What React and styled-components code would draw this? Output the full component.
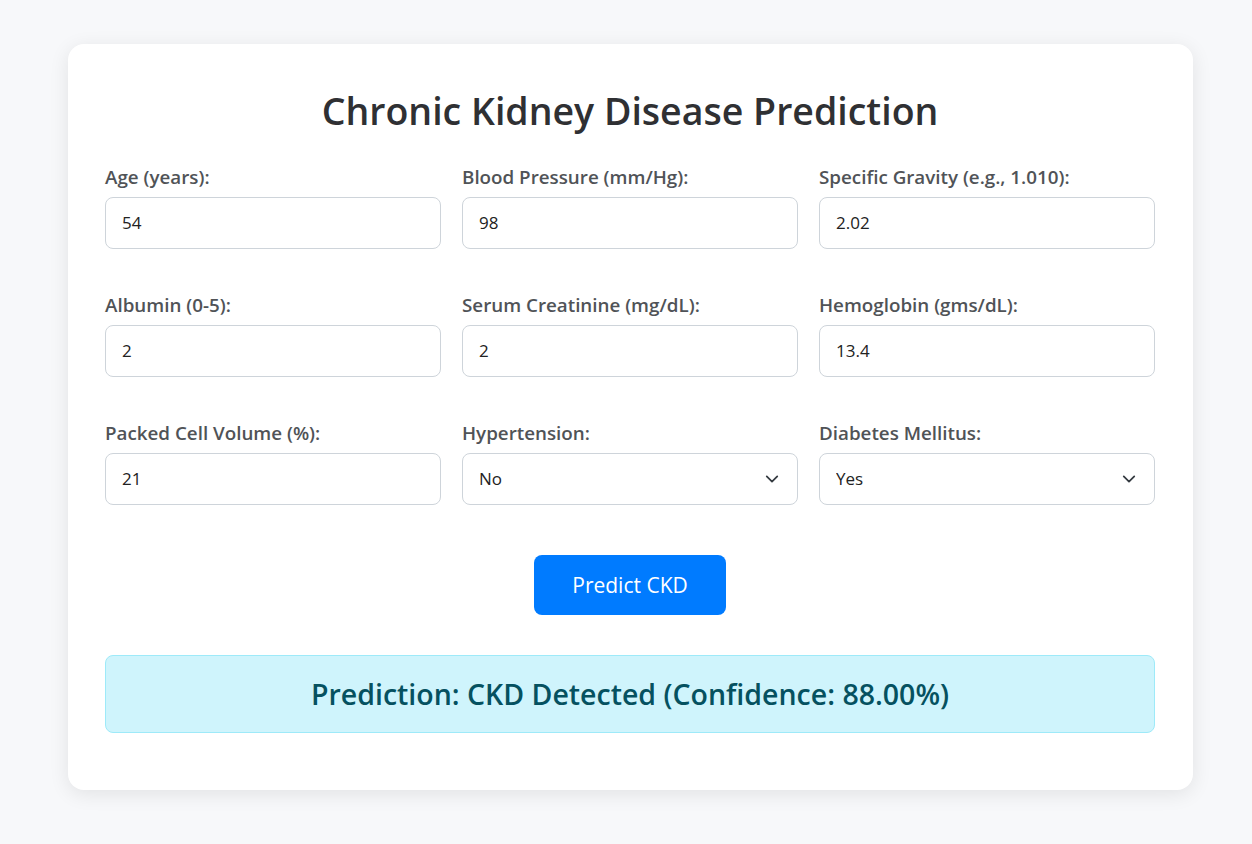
import React, { useState } from "react";
import styled, { createGlobalStyle } from "styled-components";

const GlobalStyle = createGlobalStyle`
  * { box-sizing: border-box; }
  body {
    margin: 0;
    background: #f7f8fa;
    font-family: "Open Sans", "Noto Sans", Arial, sans-serif;
  }
`;

const Page = styled.div`
  padding: 44px 59px 54px 68px;
`;

const Card = styled.div`
  background: #ffffff;
  border-radius: 16px;
  box-shadow: 0 4px 20px rgba(0, 0, 0, 0.09);
  padding: 43px 38px 57px 37px;
`;

const Title = styled.h1`
  margin: 0 0 29px;
  text-align: center;
  color: #2f3033;
  font-size: 37.5px;
  font-weight: 600;
  line-height: 1.3;
`;

const Grid = styled.div`
  display: grid;
  grid-template-columns: repeat(3, 1fr);
  column-gap: 21px;
  row-gap: 44px;
`;

const Field = styled.div`
  display: flex;
  flex-direction: column;
`;

const Label = styled.label`
  color: #505357;
  font-size: 18.8px;
  font-weight: 600;
  line-height: 24px;
  margin-bottom: 8px;
`;

const Input = styled.input`
  height: 52px;
  border: 1px solid #ced4da;
  border-radius: 8px;
  padding: 0 16px;
  font-family: inherit;
  font-size: 17px;
  color: #222;
  background: #fff;
  &:focus { outline: none; border-color: #80bdff; }
`;

const SelectWrap = styled.div`
  position: relative;
`;

const Select = styled.select`
  width: 100%;
  height: 52px;
  border: 1px solid #ced4da;
  border-radius: 8px;
  padding: 0 16px;
  font-family: inherit;
  font-size: 17px;
  color: #222;
  background: #fff;
  appearance: none;
  &:focus { outline: none; border-color: #80bdff; }
`;

const Chevron = styled.svg`
  position: absolute;
  right: 19px;
  top: 50%;
  transform: translateY(-50%);
  pointer-events: none;
`;

const Actions = styled.div`
  display: flex;
  justify-content: center;
  margin-top: 50px;
`;

const Button = styled.button`
  width: 192px;
  height: 60px;
  border: 0;
  border-radius: 8px;
  background: #007bff;
  color: #fff;
  font-family: inherit;
  font-size: 21px;
  cursor: pointer;
`;

const Result = styled.div`
  margin-top: 40px;
  height: 78px;
  display: flex;
  align-items: center;
  justify-content: center;
  background: #cff4fc;
  border: 1px solid #9eeaf9;
  border-radius: 8px;
  color: #055160;
  font-size: 28.5px;
  font-weight: 600;
`;

const fields = [
  { label: "Age (years):", value: "54" },
  { label: "Blood Pressure (mm/Hg):", value: "98" },
  { label: "Specific Gravity (e.g., 1.010):", value: "2.02" },
  { label: "Albumin (0-5):", value: "2" },
  { label: "Serum Creatinine (mg/dL):", value: "2" },
  { label: "Hemoglobin (gms/dL):", value: "13.4" },
  { label: "Packed Cell Volume (%):", value: "21" },
  { label: "Hypertension:", value: "No", select: true },
  { label: "Diabetes Mellitus:", value: "Yes", select: true },
];

const App = () => {
  const [values, setValues] = useState(fields.map((f) => f.value));

  const update = (i, v) => {
    const next = [...values];
    next[i] = v;
    setValues(next);
  };

  return (
    <Page>
      <GlobalStyle />
      <Card>
        <Title>Chronic Kidney Disease Prediction</Title>
        <Grid>
          {fields.map((f, i) => (
            <Field key={f.label}>
              <Label>{f.label}</Label>
              {f.select ? (
                <SelectWrap>
                  <Select value={values[i]} onChange={(e) => update(i, e.target.value)}>
                    <option>No</option>
                    <option>Yes</option>
                  </Select>
                  <Chevron width="14" height="14" viewBox="0 0 16 16" fill="none">
                    <path d="M2 5l6 6 6-6" stroke="#343a40" strokeWidth="2" strokeLinecap="round" strokeLinejoin="round" />
                  </Chevron>
                </SelectWrap>
              ) : (
                <Input type="text" value={values[i]} onChange={(e) => update(i, e.target.value)} />
              )}
            </Field>
          ))}
        </Grid>
        <Actions>
          <Button>Predict CKD</Button>
        </Actions>
        <Result>Prediction: CKD Detected (Confidence: 88.00%)</Result>
      </Card>
    </Page>
  );
};

export default App;
